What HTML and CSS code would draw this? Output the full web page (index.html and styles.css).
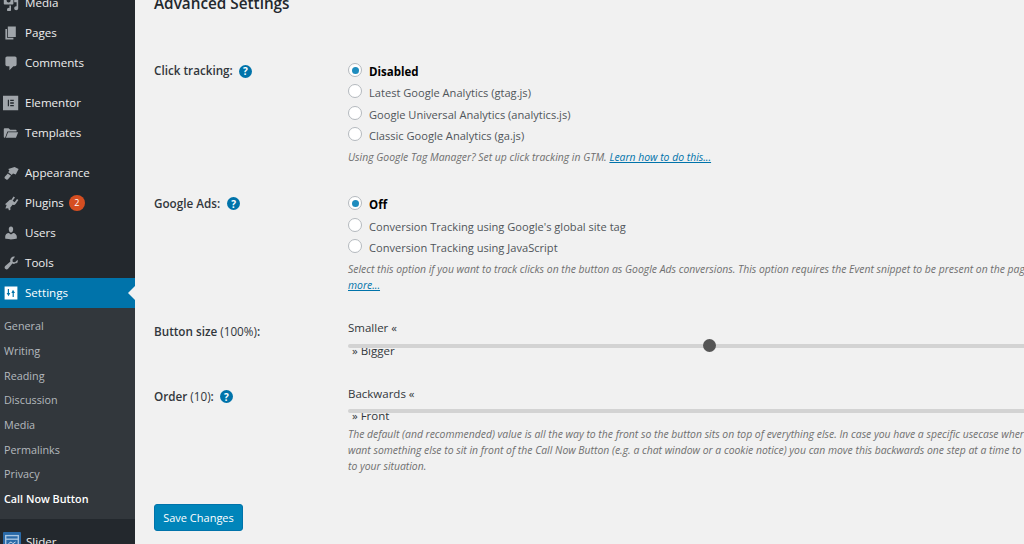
FILE: index.html
```html
<!DOCTYPE html>
<html lang="en">
<head>
<meta charset="utf-8">
<title>Call Now Button Settings</title>
<link rel="stylesheet" href="styles.css">
</head>
<body>
<nav class="sidebar">
  <ul class="menu">
    <li class="item"><svg class="ico" viewBox="0 0 20 20"><path d="M13 11V4c0-.6-.4-1-1-1h-1.700L9 1H5L3.700 3H2c-.6 0-1 .4-1 1v7c0 .6.4 1 1 1h10c.6 0 1-.4 1-1zM7 4.500c1.400 0 2.500 1.100 2.500 2.500S8.400 9.500 7 9.500 4.500 8.400 4.500 7 5.600 4.500 7 4.500zM14 6h5v10.500c0 1.400-1.100 2.500-2.500 2.500S14 17.900 14 16.500s1.100-2.500 2.500-2.500c.3 0 .5 0 .5.100V9h-3V6zM10 18.500C10 19.900 8.900 21 7.500 21S5 19.900 5 18.500 6.100 16 7.500 16c.2 0 .4 0 .5.100V13h2v5.500z"/></svg>Media</li>
    <li class="item"><svg class="ico" viewBox="0 0 20 20"><path d="M6 15V2h10v13H6zm-1 1h8v2H3V5h2v11z"/></svg>Pages</li>
    <li class="item"><svg class="ico" viewBox="0 0 20 20"><path d="M5 2h10c1.100 0 2 .9 2 2v8c0 1.100-.9 2-2 2h-2l-5 5v-5H5c-1.100 0-2-.9-2-2V4c0-1.100.9-2 2-2z"/></svg>Comments</li>
    <li class="sep"></li>
    <li class="item"><svg class="ico" viewBox="0 0 20 20"><path fill-rule="evenodd" d="M0 1h19v18H0V1zm6 5v8h1.500V6H6zm3 0v1.600h4.500V6H9zm0 3.200v1.600h4.500V9.200H9zm0 3.200V14h4.500v-1.600H9z"/></svg>Elementor</li>
    <li class="item"><svg class="ico" viewBox="0 0 20 20"><path d="M1 5c0-.6.400-1 1-1h5l2 2h7c.6 0 1 .4 1 1v1H5.500L2.600 16H2c-.6 0-1-.4-1-1V5zm5.300 4H19l-2.800 7H3.600l2.700-7z"/></svg>Templates</li>
    <li class="sep"></li>
    <li class="item"><svg class="ico" viewBox="0 0 20 20"><path d="M14.500 2.500l5 2.500-3.500 7-3.500-1.500-1.500 2-4.500-3.500 1.500-2L6.500 5l8-2.500zM6 10.500l4 3L6 18l-1.500.5L2 16.500v-1.500L6 10.500z"/></svg>Appearance</li>
    <li class="item"><svg class="ico" viewBox="0 0 20 20"><path d="M13.100 1.900L15 3.200l-3 4 2.500 1.900 3-4 1.700 1.300-3.200 4.400c-.9 1.400-2.500 1.900-4 1.500L9 16l.5 2-2 1.500-1-3L3 17l1.500-4.500-2-1L8 6.500c.9-.5 1.700-.5 2.300-.3l2.800-4.300z"/></svg><span>Plugins</span><span class="badge">2</span></li>
    <li class="item"><svg class="ico" viewBox="0 0 20 20"><path d="M10 9.250c-2.270 0-2.730-3.440-2.730-3.440C7 4.020 7.820 2 9.970 2c2.160 0 2.980 2.020 2.710 3.810 0 0-.41 3.440-2.680 3.440zm0 2.570L12.720 10c2.390 0 4.520 2.330 4.520 4.530v2.490s-3.650 1.130-7.240 1.130c-3.650 0-7.240-1.130-7.240-1.130v-2.490c0-2.250 1.940-4.480 4.570-4.480z"/></svg>Users</li>
    <li class="item"><svg class="ico" viewBox="0 0 20 20"><path d="M16.680 9.770c-1.340 1.340-3.300 1.670-4.950.99l-5.410 6.520c-.99.99-2.590.99-3.580 0s-.99-2.590 0-3.580l6.520-5.420c-.68-1.650-.35-3.610.99-4.950 1.280-1.280 3.120-1.640 4.720-1.110L11.880 5.790l.35 2.830 2.830.35 3.170-3.090c.53 1.600.17 3.440-1.110 4.720z"/></svg>Tools</li>
    <li class="item active"><svg class="ico" viewBox="0 0 20 20"><path fill-rule="evenodd" d="M2 2h16v16H2V2zm4 3v5H4.500L7 14l2-4H7.500V5H6zm6.500 1L10.500 10H12v5h1.500v-5H15l-2.500-4z"/></svg>Settings</li>
    <li class="subwrap">
      <ul class="submenu">
        <li>General</li>
        <li>Writing</li>
        <li>Reading</li>
        <li>Discussion</li>
        <li>Media</li>
        <li>Permalinks</li>
        <li>Privacy</li>
        <li class="current">Call Now Button</li>
      </ul>
    </li>
    <li class="item slider"><svg class="ico slider-ico" viewBox="0 0 20 20"><rect x="0" y="0" width="20" height="20" rx="1" fill="#2a6aa8"/><rect x="3" y="4" width="14" height="12" fill="none" stroke="#a9c6e2" stroke-width="1.500"/><path d="M3 8h14" stroke="#a9c6e2" stroke-width="1.500"/><path d="M6 13l3-2 2 2 3-2" stroke="#dce8f2" fill="none"/></svg>Slider</li>
  </ul>
</nav>
<main class="content">
  <h2 class="title">Advanced Settings</h2>

  <section class="row row-click">
    <div class="label">Click tracking: <span class="help">?</span></div>
    <div class="field">
      <div class="opt on"><span class="radio"></span>Disabled</div>
      <div class="opt"><span class="radio"></span>Latest Google Analytics (gtag.js)</div>
      <div class="opt"><span class="radio"></span>Google Universal Analytics (analytics.js)</div>
      <div class="opt"><span class="radio"></span>Classic Google Analytics (ga.js)</div>
      <p class="note">Using Google Tag Manager? Set up click tracking in GTM. <a href="#">Learn how to do this...</a></p>
    </div>
  </section>

  <section class="row row-ads">
    <div class="label">Google Ads: <span class="help">?</span></div>
    <div class="field">
      <div class="opt on"><span class="radio"></span>Off</div>
      <div class="opt"><span class="radio"></span>Conversion Tracking using Google's global site tag</div>
      <div class="opt"><span class="radio"></span>Conversion Tracking using JavaScript</div>
      <p class="note">Select this option if you want to track clicks on the button as Google Ads conversions. This option requires the Event snippet to be present on the page<br><a href="#">more...</a></p>
    </div>
  </section>

  <section class="row row-size">
    <div class="label label-slider">Button size <span class="light">(100%)</span>:</div>
    <div class="field">
      <div class="range-label">Smaller «</div>
      <div class="track"><span class="thumb"></span></div>
      <div class="range-end">» Bigger</div>
    </div>
  </section>

  <section class="row row-order">
    <div class="label label-slider">Order <span class="light">(10)</span>: <span class="help">?</span></div>
    <div class="field">
      <div class="range-label">Backwards «</div>
      <div class="track"></div>
      <div class="range-end">» Front</div>
      <p class="note note-order">The default (and recommended) value is all the way to the front so the button sits on top of everything else. In case you have a specific usecase where you<br>want something else to sit in front of the Call Now Button (e.g. a chat window or a cookie notice) you can move this backwards one step at a time to adapt it<br>to your situation.</p>
    </div>
  </section>

  <button class="save" type="button">Save Changes</button>
</main>
</body>
</html>
```
FILE: styles.css
```css
* { box-sizing: border-box; }
html, body { margin: 0; height: 544px; overflow: hidden; }
body {
  display: flex;
  background: #f1f1f1;
  color: #444;
  font-family: "Open Sans", "Noto Sans", sans-serif;
  font-size: 11.5px;
}
ul { list-style: none; margin: 0; padding: 0; }

.sidebar { width: 135px; flex: none; height: 544px; background: #23282d; overflow: hidden; }
.menu { margin-top: -12px; color: #eee; }
.item { height: 30px; display: flex; align-items: center; padding: 0 0 1px 3px; font-size: 11.6px; }
.ico { width: 16px; height: 16px; margin-right: 6px; fill: #a0a5aa; flex: none; }
.sep { height: 10px; }
.badge {
  width: 16px; height: 16px; margin-left: 5px; border-radius: 50%;
  background: #d54e21; color: #fff; font-size: 9px;
  display: flex; align-items: center; justify-content: center;
}
.active { position: relative; background: #0073aa; color: #fff; }
.active .ico { fill: #fff; }
.active::after {
  content: ""; position: absolute; right: 0; top: 8px;
  border: 7px solid transparent; border-right-color: #f1f1f1; border-left-width: 0;
}
.submenu { background: #32373c; color: #b4b9be; padding: 5.500px 0 7.500px 4px; font-size: 10.8px; }
.submenu li { height: 24.700px; display: flex; align-items: center; }
.submenu .current { color: #fff; font-weight: 600; }
.slider { margin-top: 8px; }
.slider-ico { width: 18px; height: 18px; margin-right: 5px; }

.content { flex: 1; min-width: 0; height: 544px; overflow: hidden; padding-left: 19px; }
.title { margin: -6px 0 0; height: 19px; font-size: 15.300px; line-height: 19px; font-weight: 600; color: #23282d; }

.row { display: flex; width: 1100px; }
.row-click { margin-top: 48px; }
.row-ads { margin-top: 29px; }
.row-size { margin-top: 26px; }
.row-order { margin-top: 28px; }
.label { width: 194px; flex: none; font-size: 11.7px; font-weight: 600; line-height: 16px; color: #32373c; }
.light { font-weight: 400; }
.row-click .label { padding-top: 1px; }
.row-ads .label { padding-top: 1px; }
.label-slider { padding-top: 4px; }
.row-order .label { padding-top: 3px; }
.help {
  display: inline-flex; width: 13px; height: 13px; margin-left: 3px;
  align-items: center; justify-content: center; vertical-align: 0;
  border-radius: 50%; background: #0073aa; color: #fff; font-size: 10px; font-weight: 700; line-height: 1;
}
.row-ads .help { margin-left: 4px; }
.field { flex: 1; min-width: 0; }
.opt { height: 21.700px; display: flex; align-items: center; font-size: 11.100px; font-weight: 400; color: #50555a; white-space: nowrap; }
.opt.on { color: #000; font-size: 11.500px; font-weight: 700; }
.row-click .opt.on { margin-bottom: -1px; }
.radio {
  position: relative; width: 14px; height: 14px; margin-right: 7px; margin-top: -3px; flex: none;
  border-radius: 50%; border: 1px solid #b4b9be; background: #fff;
}
.on .radio::after {
  content: ""; position: absolute; left: 2.500px; top: 2.500px; width: 7px; height: 7px;
  border-radius: 50%; background: #1e8cbe;
}
.note { margin: 0; font-size: 10.400px; line-height: 16px; font-style: italic; color: #6f6f6f; white-space: nowrap; padding-top: 2px; }
.note a { color: #0073aa; }
.note-order { padding-top: 4px; }
.range-label { height: 18px; line-height: 18px; color: #32373c; }
.track { position: relative; z-index: 1; height: 4px; margin-top: 7px; border-radius: 2px 0 0 2px; background: #d3d3d3; }
.row-order .track { margin-top: 6px; }
.thumb {
  position: absolute; left: 355px; top: -4.500px; width: 13px; height: 13px;
  border-radius: 50%; background: #555;
}
.range-end { height: 14px; margin-top: -5px; padding-left: 4px; line-height: 16px; color: #32373c; }
.save {
  display: block; width: 89px; height: 27px; margin-top: 30px; padding: 0;
  background: #0085ba; border: 1px solid #0073aa; border-radius: 3px;
  color: #fff; font: 400 11px "Open Sans", "Noto Sans", sans-serif;
}
```
